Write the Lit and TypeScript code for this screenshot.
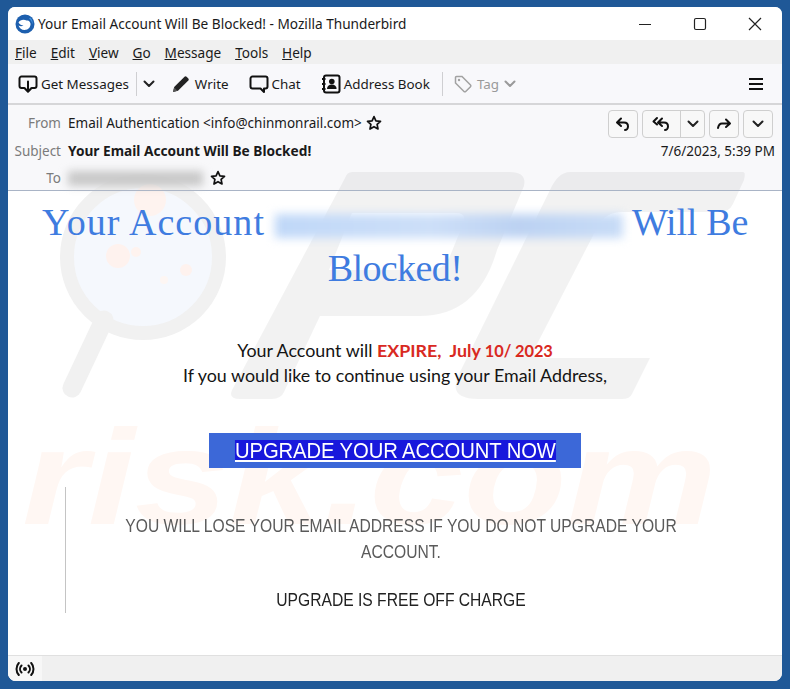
import { LitElement, html, css, svg } from "lit";
import { customElement } from "lit/decorators.js";

const chev = (color = "#222", w = 2) => html`<svg width="12" height="8" viewBox="0 0 12 8"><path d="M1.5 1.5 6 6l4.5-4.5" fill="none" stroke=${color} stroke-width=${w} stroke-linecap="round" stroke-linejoin="round"/></svg>`;
const star = html`<svg width="16" height="16" viewBox="0 0 16 16"><path d="M8 1.6l1.9 4.2 4.6.5-3.4 3.1.9 4.6L8 11.7 4 14l.9-4.6L1.5 6.3l4.6-.5z" fill="none" stroke="#111" stroke-width="1.7" stroke-linejoin="round"/></svg>`;

@customElement("app-root")
export class AppRoot extends LitElement {
  static styles = css`
    :host { display: block; width: 790px; height: 689px; box-sizing: border-box; padding: 7px 8px 8px; background: #1f5897; font-family: "Noto Sans", sans-serif; color: #1a1a1a; overflow: hidden; }
    .win { height: 674px; border-radius: 7px 7px 8px 8px; overflow: hidden; display: flex; flex-direction: column; background: #fff; }
    .title { height: 33px; flex: none; display: flex; align-items: center; padding-left: 7px; background: #fff; font-size: 13.65px; gap: 3px; }
    .title .t { flex: 1; }
    .wc { display: flex; align-items: center; }
    .wc span { width: 55px; height: 33px; display: flex; align-items: center; justify-content: center; }
    .menu { height: 24px; flex: none; background: #f0f0f0; display: flex; align-items: center; padding-left: 7px; gap: 13.9px; font-size: 13.6px; }
    .tb { height: 39px; flex: none; background: #f8f8fb; border-bottom: 2px solid #d6d6d8; box-sizing: content-box; display: flex; align-items: center; font-size: 13.4px; padding-left: 10px; }
    .tb .i { display: flex; align-items: center; gap: 3px; }
    .sep { width: 1px; height: 24px; background: #cfcfd2; }
    .msg { flex: 1; position: relative; background: linear-gradient(#f8f8fa 85px, #fff 85px); min-height: 0; }
    .wm { position: absolute; inset: 0; width: 100%; height: 100%; z-index: 0; }
    .wmt { font-family: "Liberation Sans", sans-serif; font-weight: 700; font-style: italic; font-size: 136px; fill: #fff7f3; }
    .hd { position: relative; z-index: 1; box-sizing: border-box; border-bottom: 1px solid #a9b4c6; font-size: 13.5px; display: grid; grid-template-columns: 53px 1fr auto; grid-template-rows: 32px 23px 28px; column-gap: 7px; padding-top: 2px; height: 86px; }
    .lb { color: #7b7b7b; text-align: right; align-self: center; }
    .v { align-self: center; display: flex; align-items: center; gap: 4px; white-space: nowrap; }
    .tor { padding-top: 4px; }
    .b { font-weight: 700; font-size: 13.7px; }
    .blurto { width: 135px; height: 15px; background: #c8c8c8; filter: blur(4px); margin-right: 3px; }
    .acts { display: flex; gap: 4px; padding: 3px 9px 0 0; align-items: flex-start; }
    .btn { height: 26px; min-width: 28px; border: 1px solid #cfcfcf; border-radius: 4px; background: #f8f8f8; display: flex; align-items: center; justify-content: center; }
    .btn.split { width: 61px; justify-content: flex-start; }
    .btn.split > span { display: flex; align-items: center; justify-content: center; height: 26px; }
    .btn.split > span:first-child { width: 37px; border-right: 1px solid #cfcfcf; }
    .btn.split > span:last-child { flex: 1; }
    .date { align-self: center; justify-self: end; padding-right: 7px; white-space: nowrap; }
    .body { position: relative; z-index: 1; text-align: center; }
    h1 { margin: 0; padding: 8px 30px 0; font: 400 38px/46px "Liberation Serif", serif; color: #3f7ce0; }
    .w1 { letter-spacing: 1.05px; }
    .w2 { letter-spacing: -.25px; }
    .w3 { letter-spacing: -.6px; }
    .bl { display: inline-block; width: 348px; height: 24px; vertical-align: -3px; filter: blur(5px); background: linear-gradient(90deg, #c0d8f8, #cddff8 45%, #bcd2f2 70%, #c8dcf7); }
    .p { margin-top: 47px; font: 400 17.85px/24px Lato, sans-serif; color: #141414; }
    .red { color: #d9291f; font-weight: 700; }
    .num { font-size: 16.4px; letter-spacing: -.1px; }
    .cta { width: 372px; height: 35px; margin: 46px auto 0; background: #3c68d8; display: flex; align-items: center; justify-content: center; }
    .cta a { font: 400 22px/22px "Liberation Sans", sans-serif; letter-spacing: -.1px; color: #fff; background: #1818dc; text-decoration: underline; transform: scaleX(.92); white-space: nowrap; }
    .bq { margin: 19px 0 0 57px; height: 126px; width: 670px; border-left: 1px solid #c4c4c4; box-sizing: border-box; padding-top: 26px; font: 400 18px/26px "Liberation Sans", sans-serif; color: #5a5a5a; }
    .q { width: 680px; margin-left: -5px; transform: scaleX(.869); }
    .q .k { color: #222; margin-top: 22px; }
    .st { height: 26px; flex: none; background: #f0f0f0; border-top: 1px solid #e0e0e0; box-sizing: border-box; display: flex; }
    .st .c { width: 34px; background: #f7f7f7; display: flex; align-items: center; justify-content: center; }
  `;

  render() {
    return html`<div class="win">
      <div class="title">
        <svg width="20" height="20" viewBox="0 0 20 20"><circle cx="10" cy="10" r="9.5" fill="#1d5fae"/><path d="M3.5 8.5C5 5.5 9 5 11.5 6.5c2.5-.5 3.500 1 4 3 .4 3-2 6.500-6 6.500-3 0-5-2-6-4.500 1.500 1 3.500 1 5 0C6.500 11.500 4.500 10.500 3.500 8.500z" fill="#fff"/><path d="M15.500 3.500c2 2 2.500 5 2 7-.5-2.500-1.500-4.500-3.500-6z" fill="#3f8fdc"/></svg>
        <span class="t">Your Email Account Will Be Blocked! - Mozilla Thunderbird</span>
        <div class="wc">
          <span><svg width="14" height="14" viewBox="0 0 14 14"><path d="M1 7.500h12" stroke="#222" stroke-width="1.200"/></svg></span>
          <span><svg width="14" height="14" viewBox="0 0 14 14"><rect x="1.500" y="1.500" width="11" height="11" rx="1.500" fill="none" stroke="#222" stroke-width="1.200"/></svg></span>
          <span><svg width="14" height="14" viewBox="0 0 14 14"><path d="M1 1l12 12M13 1L1 13" stroke="#222" stroke-width="1.200"/></svg></span>
        </div>
      </div>
      <div class="menu">
        <span><u>F</u>ile</span><span><u>E</u>dit</span><span><u>V</u>iew</span><span><u>G</u>o</span><span><u>M</u>essage</span><span><u>T</u>ools</span><span><u>H</u>elp</span>
      </div>
      <div class="tb">
        <span class="i"><svg width="20" height="20" viewBox="0 0 20 20"><path d="M6 14H3.500A2 2 0 0 1 1.500 12V4.500a2 2 0 0 1 2-2h13a2 2 0 0 1 2 2V12a2 2 0 0 1-2 2H14" fill="none" stroke="#111" stroke-width="2"/><path d="M10 7.500v10M6.500 14l3.500 3.800 3.500-3.800" fill="none" stroke="#111" stroke-width="2" stroke-linecap="round" stroke-linejoin="round"/></svg>Get Messages</span>
        <span class="sep" style="margin-left:7px"></span>
        <span style="margin-left:6px;display:flex">${chev()}</span>
        <span class="i" style="margin-left:17px;gap:5px"><svg width="18" height="18" viewBox="0 0 18 18"><path d="M1 17l1.200-5L12.500 1.700a1.500 1.500 0 0 1 2.100 0l1.700 1.700a1.500 1.500 0 0 1 0 2.100L6 15.800z" fill="#222"/><path d="M1 17l1.200-4.400 3.200 3.200z" fill="#555"/></svg>Write</span>
        <span class="i" style="margin-left:20px"><svg width="20" height="20" viewBox="0 0 20 20"><path d="M3.500 2.500h13a2 2 0 0 1 2 2v8a2 2 0 0 1-2 2H15v3.500L11.500 14.500h-8a2 2 0 0 1-2-2v-8a2 2 0 0 1 2-2z" fill="none" stroke="#111" stroke-width="2" stroke-linejoin="round"/></svg>Chat</span>
        <span class="i" style="margin-left:20px"><svg width="20" height="20" viewBox="0 0 20 20"><rect x="3" y="1.500" width="15.500" height="17" rx="2" fill="none" stroke="#111" stroke-width="2"/><path d="M1 5h3.500M1 10h3.500M1 15h3.500" stroke="#111" stroke-width="1.800"/><circle cx="10.800" cy="7.500" r="2.800" fill="#111"/><path d="M6 15c0-3 2-4.500 4.800-4.500s4.800 1.500 4.800 4.500z" fill="#111"/></svg>Address Book</span>
        <span class="sep" style="margin-left:12px"></span>
        <span class="i" style="margin-left:11px;gap:5px;color:#9a9a9a"><svg width="18" height="18" viewBox="0 0 18 18"><path d="M1.500 2.500a1 1 0 0 1 1-1H8l8.500 8.500a1.200 1.200 0 0 1 0 1.700l-4.800 4.800a1.200 1.200 0 0 1-1.700 0L1.500 8z" fill="none" stroke="#a2a2a2" stroke-width="1.500"/><circle cx="5" cy="5" r="1.200" fill="#a2a2a2"/></svg>Tag</span>
        <span style="margin-left:5px;display:flex">${chev("#9a9a9a")}</span>
        <span style="margin-left:auto;padding-right:19px;display:flex"><svg width="14" height="14" viewBox="0 0 14 14"><path d="M0 2h14M0 7h14M0 12h14" stroke="#111" stroke-width="2"/></svg></span>
      </div>
      <div class="msg">
        <svg class="wm" viewBox="8 105 774 550" preserveAspectRatio="none">
          ${svg`
          <circle cx="143" cy="257" r="76" fill="#f5f8fd" stroke="#f1f1f1" stroke-width="14"/>
          <circle cx="118" cy="256" r="12" fill="#fef2ee"/><circle cx="150" cy="200" r="16" fill="#fef3ef"/><circle cx="136" cy="252" r="5" fill="#fef3ef"/><circle cx="186" cy="270" r="6" fill="#fef2ee"/><circle cx="164" cy="280" r="4" fill="#fdf6f3"/>
          <path d="M104 320 72 388" stroke="#f1f1f1" stroke-width="19" stroke-linecap="round"/>
          <path fill="#000" fill-opacity=".05" fill-rule="evenodd" d="M352 172H510Q527 172 524 186L497 250Q478 316 420 316H320L284 392Q281 399 272 399H240Q228 399 232 390L345 178Q347 172 352 172ZM352 213 329 270H430Q444 270 450 256L463 224Q467 213 456 213Z"/>
          <path fill="#000" fill-opacity=".05" d="M570 172H743Q746 172 744 180L733 204Q729 212 720 212H622Q606 212 598 226L535 348Q531 358 545 358H650L632 394Q630 399 622 399H478Q448 399 458 376L550 190Q558 172 570 172Z"/>
          <text class="wmt" x="22" y="524" textLength="695" lengthAdjust="spacingAndGlyphs">risk.com</text>
          `}
        </svg>
        <div class="hd">
          <span class="lb">From</span>
          <span class="v">Email Authentication &lt;info@chinmonrail.com&gt; ${star}</span>
          <div class="acts">
            <span class="btn"><svg width="16" height="16" viewBox="0 0 16 16"><path d="M6 2.500 2 6.500l4 3.500M2.500 6.500H9c3 0 4 2 4 4s-1.500 3.500-3 3.500" fill="none" stroke="#111" stroke-width="2" stroke-linecap="round" stroke-linejoin="round"/></svg></span>
            <span class="btn split"><span><svg width="20" height="16" viewBox="0 0 20 16"><path d="M5 2 1.500 5.500 5 8.500M10 2.500 6 6.500l4 3.500M6.500 6.500H12c3 0 4 2 4 4s-1.500 3.500-3 3.500" fill="none" stroke="#111" stroke-width="2" stroke-linecap="round" stroke-linejoin="round"/></svg></span><span>${chev()}</span></span>
            <span class="btn"><svg width="16" height="16" viewBox="0 0 16 16"><path d="M10 3.500l4 4-4 3.500M13.500 7.500H6C3.500 7.500 2.500 9.500 2 12" fill="none" stroke="#111" stroke-width="2" stroke-linecap="round" stroke-linejoin="round"/></svg></span>
            <span class="btn">${chev()}</span>
          </div>
          <span class="lb">Subject</span>
          <span class="v b">Your Email Account Will Be Blocked!</span>
          <span class="date">7/6/2023, 5:39 PM</span>
          <span class="lb tor">To</span>
          <span class="v tor"><span class="blurto"></span>${star}</span>
          <span></span>
        </div>
        <div class="body">
          <h1><span class="w1">Your Account</span> <span class="bl"></span> <span class="w2">Will Be</span> <span class="w3">Blocked!</span></h1>
          <div class="p">Your Account will <span class="red">EXPIRE,&nbsp; July <span class="num">10/ 2023</span></span><br>If you would like to continue using your Email Address,</div>
          <div class="cta"><a href="#">UPGRADE YOUR ACCOUNT NOW</a></div>
          <div class="bq"><div class="q">YOU WILL LOSE YOUR EMAIL ADDRESS IF YOU DO NOT UPGRADE YOUR ACCOUNT.<div class="k">UPGRADE IS FREE OFF CHARGE</div></div></div>
        </div>
      </div>
      <div class="st"><span class="c"><svg width="20" height="14" viewBox="0 0 20 14"><circle cx="10" cy="7" r="2" fill="#111"/><path d="M6.500 3.500a5 5 0 0 0 0 7M13.500 3.500a5 5 0 0 1 0 7M3.800 1a9 9 0 0 0 0 12M16.200 1a9 9 0 0 1 0 12" fill="none" stroke="#111" stroke-width="2" stroke-linecap="round"/></svg></span></div>
    </div>`;
  }
}
